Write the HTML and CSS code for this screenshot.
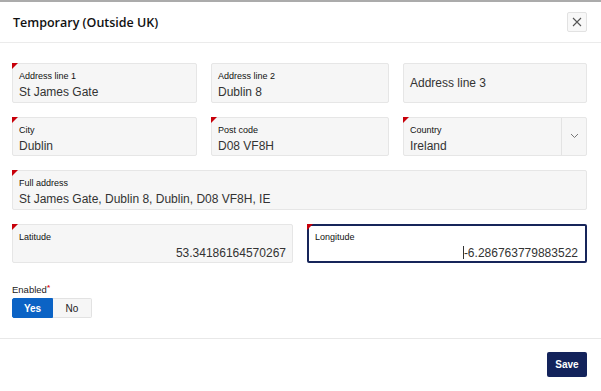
FILE: index.html
```html
<!DOCTYPE html>
<html lang="en">

<head>
  <meta charset="UTF-8" />
  <title>Temporary (Outside UK)</title>
  <link rel="stylesheet" href="styles.css">
</head>

<body>
  <div class="dialog">
    <div class="dialog-header">
      <h2>Temporary (Outside UK)</h2>
      <button class="close-button" aria-label="Close">
        <svg width="10" height="10" viewBox="0 0 10 10"><path d="M1 1L9 9M9 1L1 9" stroke="#555" stroke-width="1.1" fill="none" /></svg>
      </button>
    </div>

    <div class="dialog-body">
      <div class="form-rows">
        <div class="form-row thirds">
          <div class="field required">
            <label>Address line 1</label>
            <div class="value">St James Gate</div>
          </div>
          <div class="field">
            <label>Address line 2</label>
            <div class="value">Dublin 8</div>
          </div>
          <div class="field empty">
            <div class="placeholder">Address line 3</div>
          </div>
        </div>

        <div class="form-row thirds">
          <div class="field required">
            <label>City</label>
            <div class="value">Dublin</div>
          </div>
          <div class="field required">
            <label>Post code</label>
            <div class="value">D08 VF8H</div>
          </div>
          <div class="field required select">
            <div class="select-main">
              <label>Country</label>
              <div class="value">Ireland</div>
            </div>
            <div class="select-arrow">
              <svg width="9" height="6" viewBox="0 0 9 6"><path d="M1 1L4.5 4.5L8 1" stroke="#777" stroke-width="1" fill="none" /></svg>
            </div>
          </div>
        </div>

        <div class="form-row">
          <div class="field required">
            <label>Full address</label>
            <div class="value">St James Gate, Dublin 8, Dublin, D08 VF8H, IE</div>
          </div>
        </div>

        <div class="form-row halves">
          <div class="field required">
            <label>Latitude</label>
            <div class="value number">53.34186164570267</div>
          </div>
          <div class="field required focused">
            <label>Longitude</label>
            <div class="value number"><span class="caret"></span>-6.286763779883522</div>
          </div>
        </div>
      </div>

      <div class="enabled">
        <div class="enabled-label">Enabled<span class="asterisk">*</span></div>
        <div class="toggle-group">
          <button class="toggle-btn active">Yes</button>
          <button class="toggle-btn">No</button>
        </div>
      </div>
    </div>

    <div class="dialog-footer">
      <button class="save-button">Save</button>
    </div>
  </div>
</body>

</html>
```

FILE: styles.css
```css
body {
  margin: 0;
  background: #fff;
  font-family: 'Liberation Sans', Arial, sans-serif;
  color: #222;
}

.dialog {
  width: 601px;
  height: 391px;
  border-top: 2px solid #ababab;
  box-sizing: border-box;
}

.dialog-header {
  height: 40px;
  display: flex;
  align-items: center;
  justify-content: space-between;
  padding: 0 14px 0 13px;
  border-bottom: 1px solid #ebebeb;
}

.dialog-header h2 {
  margin: 0;
  font-family: 'Open Sans', sans-serif;
  font-size: 12.5px;
  font-weight: 600;
  color: #111;
}

.close-button {
  width: 20px;
  height: 20px;
  padding: 0;
  display: flex;
  align-items: center;
  justify-content: center;
  background: #f8f8f8;
  border: 1px solid #e2e2e2;
  border-radius: 2px;
}

.dialog-body {
  padding: 20px 14px 20px 12px;
}

.form-rows {
  display: flex;
  flex-direction: column;
  gap: 14px;
}

.form-row {
  display: grid;
  grid-template-columns: 1fr;
  gap: 14px;
}

.form-row.thirds {
  grid-template-columns: 185px 178px 184px;
}

.form-row.halves {
  grid-template-columns: 281px 280px;
}

.field {
  position: relative;
  height: 39.5px;
  box-sizing: border-box;
  padding: 6px 6px 0 6px;
  background: #f6f6f6;
  border: 1px solid #e6e6e6;
  border-radius: 2px;
}

.required::before {
  content: "";
  position: absolute;
  top: -1px;
  left: -1px;
  border-top: 6px solid #c8000a;
  border-right: 6px solid transparent;
}

.field label {
  display: block;
  font-size: 9px;
  line-height: 12px;
  color: #111;
}

.field .value {
  margin-top: 2px;
  font-size: 12px;
  line-height: 16px;
  color: #333;
}

.field .value.number {
  text-align: right;
}

.field.empty {
  display: flex;
  align-items: center;
  padding-top: 0;
}

.placeholder {
  font-size: 12px;
  color: #333;
}

.field.select {
  display: flex;
  padding: 0;
}

.select-main {
  flex: 1;
  padding: 6px 6px 0 6px;
}

.select-arrow {
  width: 24px;
  display: flex;
  align-items: center;
  justify-content: center;
  border-left: 1px solid #e3e3e3;
}

.field.focused {
  background: #fff;
  border: 2px solid #17255a;
  padding: 5px 7px 0 6px;
}

.field.focused::before {
  top: -2px;
  left: -2px;
}

.caret {
  display: inline-block;
  width: 1px;
  height: 13px;
  background: #333;
  vertical-align: -2px;
}

.enabled {
  margin-top: 21px;
}

.enabled-label {
  font-size: 9.5px;
  line-height: 12px;
  color: #222;
}

.asterisk {
  color: #e0141c;
  font-size: 8px;
  font-weight: bold;
  line-height: 0;
  position: relative;
  top: -3px;
}

.toggle-group {
  display: flex;
  margin-top: 2px;
}

.toggle-btn {
  height: 20px;
  padding: 0;
  font-family: 'Liberation Sans', Arial, sans-serif;
  font-size: 10px;
  color: #222;
  background: #f6f6f6;
  border: 1px solid #e2e2e2;
}

.toggle-btn:first-child {
  width: 41px;
  border-radius: 2px 0 0 2px;
}

.toggle-btn:last-child {
  width: 39px;
  border-left: none;
  border-radius: 0 2px 2px 0;
}

.toggle-btn.active {
  background: #0b63c5;
  border-color: #0b63c5;
  color: #fff;
  font-weight: bold;
}

.dialog-footer {
  display: flex;
  justify-content: flex-end;
  padding: 13px 14px 0 0;
  border-top: 1px solid #e8e8e8;
}

.save-button {
  width: 40px;
  height: 25px;
  padding: 0;
  background: #13235b;
  border: none;
  border-radius: 2px;
  color: #fff;
  font-family: 'Liberation Sans', Arial, sans-serif;
  font-size: 10px;
  font-weight: bold;
}
```
